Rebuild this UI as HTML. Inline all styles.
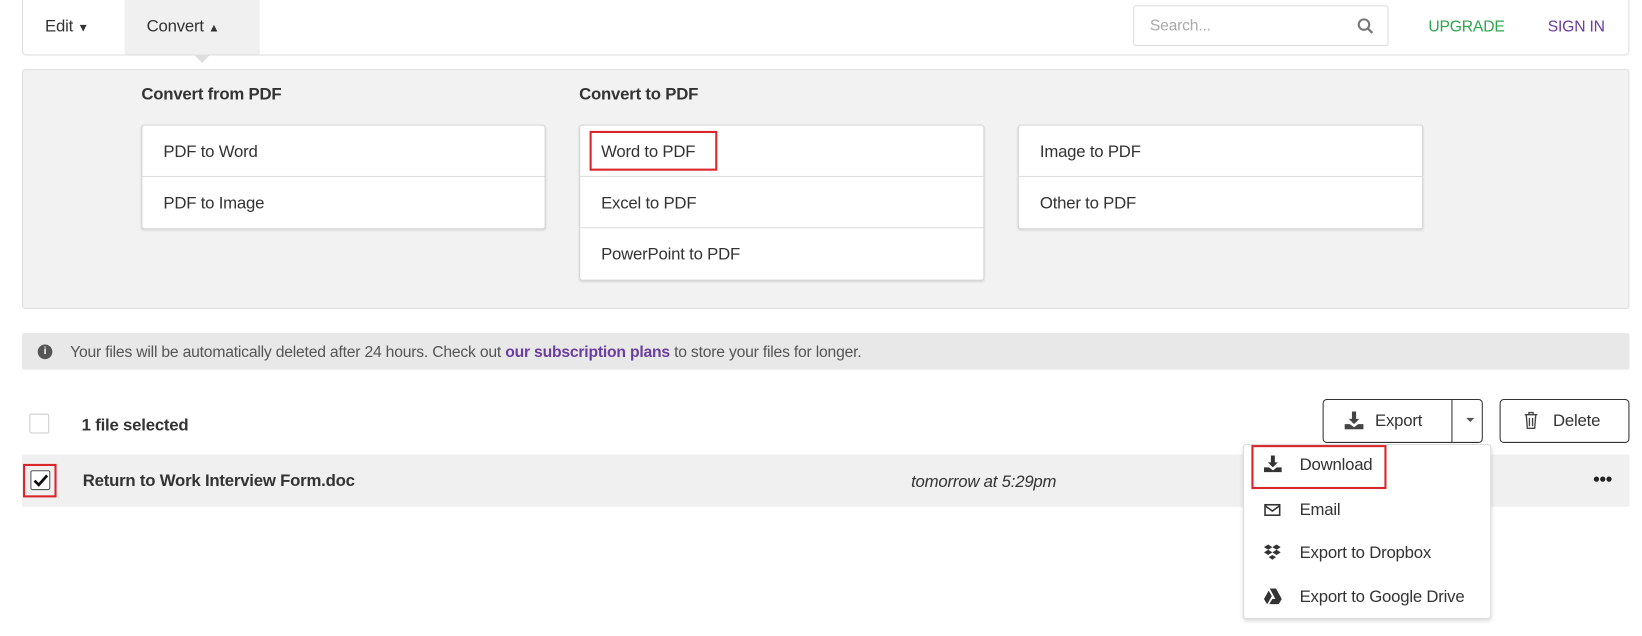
<!DOCTYPE html>
<html><head><meta charset="utf-8"><style>
*{box-sizing:border-box;margin:0;padding:0}
body{width:1642px;height:635px;overflow:hidden;background:#fff;font-family:"Liberation Sans",sans-serif;color:#333}
#w{position:absolute;left:0;top:0;width:1568px;height:607px;transform:scale(1.0472);transform-origin:0 0}
.a{position:absolute}
.t{position:absolute;font-size:16px;white-space:nowrap;line-height:20px;letter-spacing:-0.2px}
.card{position:absolute;background:#fff;border:1px solid #d6d6d6;border-radius:3px;box-shadow:0 1px 2px rgba(0,0,0,.12)}
.row{height:49px;border-bottom:1px solid #ddd;padding-left:20px;line-height:51px;font-size:16px;letter-spacing:-0.2px}
.row:last-child{border-bottom:none}
.red{position:absolute;border:2px solid #d9262a}
.btn{position:absolute;border:1px solid #333;border-radius:4px;background:#fff}
.dot{position:absolute;width:5px;height:5px;border-radius:50%;background:#222}
</style></head><body><div id="w">
<div class="a" style="left:21px;top:-2px;width:1535px;height:55px;border:1px solid #ddd;border-radius:0 0 4px 4px;background:#fff"></div>
<div class="a" style="left:119px;top:0;width:129px;height:52px;background:#f0f0f0"></div>
<div class="a" style="left:186px;top:53px;width:0;height:0;border-left:7px solid transparent;border-right:7px solid transparent;border-top:7px solid #ddd"></div>
<div class="t" style="left:43px;top:16px">Edit <span style="font-size:11px">▼</span></div>
<div class="t" style="left:140px;top:16px">Convert <span style="font-size:11px">▲</span></div>
<div class="a" style="left:1082px;top:5px;width:244px;height:39px;border:1px solid #ddd;border-radius:3px"></div>
<div class="t" style="left:1098px;top:15px;color:#aaa;font-size:15px">Search...</div>
<svg class="a" style="left:1296px;top:17px" width="16" height="16" viewBox="0 0 16 16"><circle cx="6.5" cy="6.5" r="5" fill="none" stroke="#777" stroke-width="2"/><path d="M10 10l4.5 4.5" stroke="#777" stroke-width="2.2"/></svg>
<div class="t" style="left:1364px;top:16px;color:#2ea64e;font-size:15px">UPGRADE</div>
<div class="t" style="left:1478px;top:16px;color:#6a3da0;font-size:15px">SIGN IN</div>

<div class="a" style="left:21px;top:66px;width:1535px;height:229px;background:#f2f2f2;border:1px solid #ddd;border-radius:3px"></div>
<div class="t" style="left:135px;top:81px;font-weight:bold">Convert from PDF</div>
<div class="t" style="left:553px;top:81px;font-weight:bold">Convert to PDF</div>
<div class="card" style="left:135px;top:119px;width:386px"><div class="row">PDF to Word</div><div class="row">PDF to Image</div></div>
<div class="card" style="left:553px;top:119px;width:387px"><div class="row">Word to PDF</div><div class="row">Excel to PDF</div><div class="row">PowerPoint to PDF</div></div>
<div class="card" style="left:972px;top:119px;width:387px"><div class="row">Image to PDF</div><div class="row">Other to PDF</div></div>
<div class="red" style="left:563px;top:125px;width:122px;height:38px"></div>

<div class="a" style="left:21px;top:318px;width:1535px;height:35px;background:#e8e8e8;border-radius:2px"></div>
<div class="a" style="left:36px;top:329px;width:14px;height:14px;border-radius:50%;background:#555;color:#fff;font-size:10px;font-weight:bold;text-align:center;line-height:14px">i</div>
<div class="t" style="left:67px;top:327px;font-size:15px;color:#555">Your files will be automatically deleted after 24 hours. Check out <b style="color:#6a3da0">our subscription plans</b> to store your files for longer.</div>

<div class="a" style="left:28px;top:395px;width:19px;height:19px;border:1px solid #ccc;border-radius:2px"></div>
<div class="t" style="left:78px;top:397px;font-weight:bold">1 file selected</div>
<div class="btn" style="left:1263px;top:381px;width:153px;height:42px"></div>
<div class="a" style="left:1386px;top:381px;width:1px;height:42px;background:#333"></div>
<svg class="a" style="left:1284px;top:393px" width="18" height="17" viewBox="0 0 18 17"><path d="M7 0h4v7h3l-5 5-5-5h3z" fill="#444"/><path d="M0 12h5l4 3 4-3h5v5H0z" fill="#444"/></svg>
<div class="t" style="left:1313px;top:393px">Export</div>
<div class="a" style="left:1400px;top:399px;border-left:4px solid transparent;border-right:4px solid transparent;border-top:4px solid #555"></div>
<div class="btn" style="left:1432px;top:381px;width:124px;height:42px"></div>
<svg class="a" style="left:1455px;top:393px" width="14" height="17" viewBox="0 0 14 17"><path d="M1 3h12M5 3V1h4v2M2.5 3.5l1 12.5h7l1-12.5M5.5 6v8M8.5 6v8" fill="none" stroke="#444" stroke-width="1.3"/></svg>
<div class="t" style="left:1483px;top:393px">Delete</div>

<div class="a" style="left:21px;top:434px;width:1535px;height:50px;background:#f0f0f0"></div>
<div class="a" style="left:29px;top:449px;width:19px;height:19px;border:1px solid #555;border-radius:2px;background:#fff"></div>
<svg class="a" style="left:30px;top:450px" width="17" height="17" viewBox="0 0 17 17"><path d="M3 9l4 4 8-9" fill="none" stroke="#111" stroke-width="2.6"/></svg>
<div class="red" style="left:22px;top:443px;width:32px;height:32px"></div>
<div class="t" style="left:79px;top:450px;font-weight:bold">Return to Work Interview Form.doc</div>
<div class="t" style="left:870px;top:451px;font-style:italic">tomorrow at 5:29pm</div>
<div class="dot" style="left:1522px;top:455px"></div><div class="dot" style="left:1528px;top:455px"></div><div class="dot" style="left:1534px;top:455px"></div>

<div class="a" style="left:1187px;top:424px;width:237px;height:167px;background:#fff;border:1px solid #ddd;border-radius:3px;box-shadow:0 2px 4px rgba(0,0,0,.15)"></div>
<svg class="a" style="left:1207px;top:435px" width="17" height="16" viewBox="0 0 18 17"><path d="M7 0h4v7h3l-5 5-5-5h3z" fill="#333"/><path d="M0 12h5l4 3 4-3h5v5H0z" fill="#333"/></svg>
<div class="t" style="left:1241px;top:435px">Download</div>
<div class="red" style="left:1195px;top:425px;width:129px;height:42px"></div>
<svg class="a" style="left:1207px;top:481px" width="16" height="12" viewBox="0 0 16 12"><rect x="1" y="1" width="14" height="10" fill="none" stroke="#333" stroke-width="1.5"/><path d="M1 2l7 5 7-5" fill="none" stroke="#333" stroke-width="1.5"/></svg>
<div class="t" style="left:1241px;top:478px">Email</div>
<svg class="a" style="left:1207px;top:520px" width="16" height="15" viewBox="0 0 16 15"><path d="M4 0l4 2.5-4 2.5-4-2.5zM12 0l4 2.5-4 2.5-4-2.5zM4 5l4 2.5-4 2.5-4-2.5zM12 5l4 2.5-4 2.5-4-2.5zM8 10l3.5 2-3.5 2.5-3.5-2.5z" fill="#333"/></svg>
<div class="t" style="left:1241px;top:519px">Export to Dropbox</div>
<svg class="a" style="left:1207px;top:562px" width="17" height="15" viewBox="0 0 17 15"><path d="M5.5 0h6l5.5 10h-6zM4.5 2l3 5.3L3 15 0 10zM5 15l3-5h9l-3 5z" fill="#333"/></svg>
<div class="t" style="left:1241px;top:561px">Export to Google Drive</div>
</div></body></html>
